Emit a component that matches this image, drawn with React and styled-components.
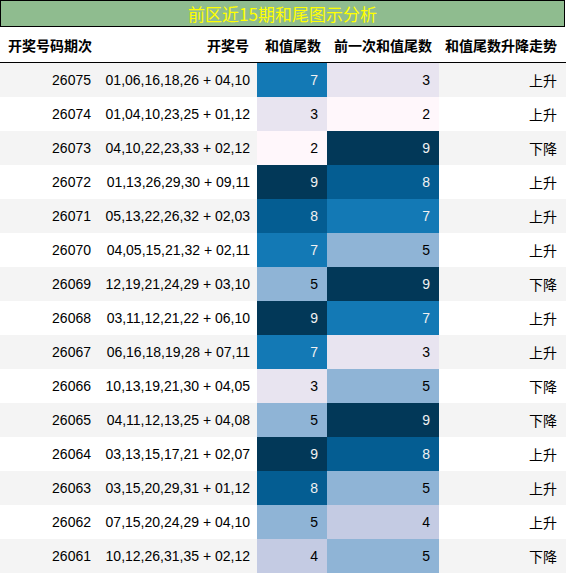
import React from "react"
import styled, { createGlobalStyle } from "styled-components"

const GlobalStyle = createGlobalStyle`
  body {
    margin: 0;
    background: #ffffff;
    font-family: "Liberation Sans", "Noto Sans CJK SC", sans-serif;
  }
`

const Page = styled.div`
  width: 566px;
`

const Title = styled.div`
  width: 563px;
  height: 25px;
  border: 1px solid #000000;
  background: #8fbc8f;
  color: #ffff00;
  font-family: "Noto Sans CJK SC", sans-serif;
  font-size: 17px;
  line-height: 25px;
  text-align: center;
`

const Table = styled.table`
  border-collapse: collapse;
  table-layout: fixed;
  width: 566px;
  font-size: 14px;
  color: #000000;
`

const HeadCell = styled.th`
  height: 35px;
  padding: 0 ${props => props.$pr || 7}px 0 ${props => props.$pl || 0}px;
  border-bottom: 1px solid #000000;
  font-family: "Noto Sans CJK SC", sans-serif;
  font-weight: bold;
  font-size: 14px;
  text-align: ${props => props.$align || "right"};
  white-space: nowrap;
`

const Row = styled.tr`
  background: ${props => (props.$odd ? "#f4f4f4" : "#ffffff")};
`

const Cell = styled.td`
  height: 34px;
  padding: 0 ${props => props.$pr || 7}px 0 0;
  text-align: right;
  white-space: nowrap;
  font-family: "Liberation Sans", "Noto Sans CJK SC", sans-serif;
`

const HeatCell = styled(Cell)`
  background: ${props => props.$bg};
  color: ${props => props.$fg};
  padding-right: 9px;
`

const TrendCell = styled(Cell)`
  font-family: "Noto Sans CJK SC", sans-serif;
  padding-right: 9px;
`

// PuBu gradient, values 2..9
const heat = {
  2: ["#fff7fb", "#000000"],
  3: ["#e8e4f0", "#000000"],
  4: ["#c4cbe3", "#000000"],
  5: ["#8fb4d6", "#000000"],
  7: ["#1379b5", "#f1f1f1"],
  8: ["#045d92", "#f1f1f1"],
  9: ["#023858", "#f1f1f1"],
}

const rows = [
  ["26075", "01,06,16,18,26 + 04,10", 7, 3, "上升"],
  ["26074", "01,04,10,23,25 + 01,12", 3, 2, "上升"],
  ["26073", "04,10,22,23,33 + 02,12", 2, 9, "下降"],
  ["26072", "01,13,26,29,30 + 09,11", 9, 8, "上升"],
  ["26071", "05,13,22,26,32 + 02,03", 8, 7, "上升"],
  ["26070", "04,05,15,21,32 + 02,11", 7, 5, "上升"],
  ["26069", "12,19,21,24,29 + 03,10", 5, 9, "下降"],
  ["26068", "03,11,12,21,22 + 06,10", 9, 7, "上升"],
  ["26067", "06,16,18,19,28 + 07,11", 7, 3, "上升"],
  ["26066", "10,13,19,21,30 + 04,05", 3, 5, "下降"],
  ["26065", "04,11,12,13,25 + 04,08", 5, 9, "下降"],
  ["26064", "03,13,15,17,21 + 02,07", 9, 8, "上升"],
  ["26063", "03,15,20,29,31 + 01,12", 8, 5, "上升"],
  ["26062", "07,15,20,24,29 + 04,10", 5, 4, "上升"],
  ["26061", "10,12,26,31,35 + 02,12", 4, 5, "下降"],
]

export default function App() {
  return (
    <Page>
      <GlobalStyle />
      <Title>前区近15期和尾图示分析</Title>
      <Table>
        <colgroup>
          <col style={{ width: 97 }} />
          <col style={{ width: 160 }} />
          <col style={{ width: 70 }} />
          <col style={{ width: 112 }} />
          <col style={{ width: 127 }} />
        </colgroup>
        <thead>
          <tr>
            <HeadCell $align="left" $pl={8}>开奖号码期次</HeadCell>
            <HeadCell $pr={8}>开奖号</HeadCell>
            <HeadCell $pr={6}>和值尾数</HeadCell>
            <HeadCell>前一次和值尾数</HeadCell>
            <HeadCell $pr={9}>和值尾数升降走势</HeadCell>
          </tr>
        </thead>
        <tbody>
          {rows.map((r, i) => (
            <Row key={r[0]} $odd={i % 2 === 0}>
              <Cell $pr={6}>{r[0]}</Cell>
              <Cell>{r[1]}</Cell>
              <HeatCell $bg={heat[r[2]][0]} $fg={heat[r[2]][1]}>{r[2]}</HeatCell>
              <HeatCell $bg={heat[r[3]][0]} $fg={heat[r[3]][1]}>{r[3]}</HeatCell>
              <TrendCell>{r[4]}</TrendCell>
            </Row>
          ))}
        </tbody>
      </Table>
    </Page>
  )
}
